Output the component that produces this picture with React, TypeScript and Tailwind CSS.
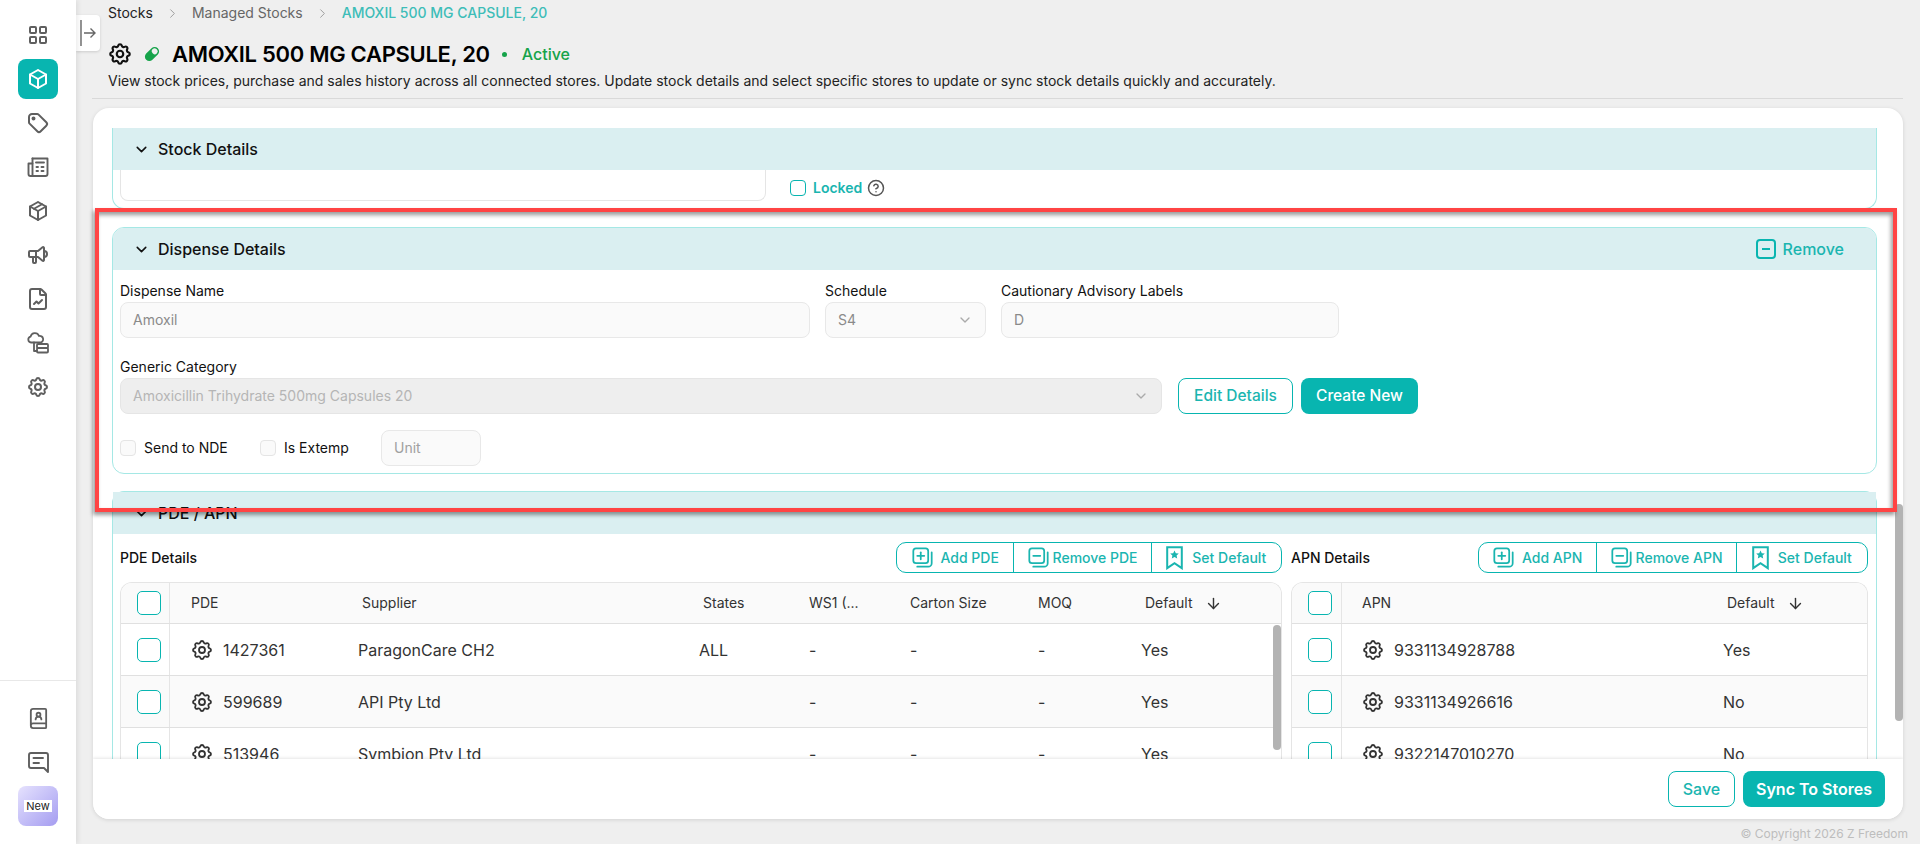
import React from "react";
import { ArrowDown, BookUser, ChevronDown, ChevronRight, CircleHelp, FileChartLine } from "lucide-react";
import { TbBox, TbLayoutGrid, TbPackage, TbSettings, TbSpeakerphone, TbTag } from "react-icons/tb";

const CloudDb = () => (
  <svg width="24" height="24" viewBox="0 0 24 24" fill="none" stroke="currentColor" strokeWidth="1.8" strokeLinejoin="round" strokeLinecap="round">
    <path d="M5 11.5a3 3 0 0 1-.4-5.9 4.4 4.4 0 0 1 8.4-.6 3.2 3.2 0 0 1 1.6 6.5H5z" />
    <path d="M8 11.5V20h3" />
    <rect x="11" y="13" width="11" height="4" rx="1" />
    <rect x="11" y="17" width="11" height="4.5" rx="1" />
  </svg>
);

const NewsGrid = () => (
  <svg width="24" height="24" viewBox="0 0 24 24" fill="none" stroke="currentColor" strokeWidth="1.9" strokeLinejoin="round" strokeLinecap="round">
    <path d="M6.5 3.5H21.5V19a2 2 0 0 1-2 2H4.5a2 2 0 0 1-2-2V8.5h4" />
    <path d="M6.5 3.5V21" />
    <path d="M10 7.5h8M10.5 12h1.5M15.5 12h2M10.5 16h1.5M15.5 16h2" />
  </svg>
);

const Chat = () => (
  <svg width="24" height="24" viewBox="0 0 24 24" fill="none" stroke="currentColor" strokeWidth="1.9" strokeLinejoin="round" strokeLinecap="round">
    <path d="M5 3h15a2 2 0 0 1 2 2v17l-4-4H5a2 2 0 0 1-2-2V5a2 2 0 0 1 2-2z" />
    <path d="M7.5 8h9.5M7.5 13h5.5" />
  </svg>
);

const Pill = () => (
  <svg width="18" height="18" viewBox="0 0 18 18" className="text-[#16a34a]">
    <g transform="rotate(-45 9 9)">
      <rect x="0.8" y="4.6" width="16.4" height="8.8" rx="4.4" fill="currentColor" />
      <rect x="10" y="6" width="5.6" height="6" rx="2.6" fill="#efefef" />
    </g>
  </svg>
);

const CopyIcon = ({ minus }: { minus?: boolean }) => (
  <svg width="21" height="21" viewBox="0 0 24 24" fill="none" stroke="currentColor" strokeWidth="2" strokeLinecap="round" strokeLinejoin="round" className="shrink-0">
    <rect x="1.5" y="1.5" width="17" height="17" rx="3" />
    <path d="M6 10h8" />
    {!minus && <path d="M10 6v8" />}
    <path d="M22.5 6v12.5a4 4 0 0 1-4 4H6" />
  </svg>
);

const BookmarkStar = () => (
  <svg width="17" height="24" viewBox="0 0 17 24" className="shrink-0">
    <path d="M1.2 1.2h14.6v21l-7.3-5-7.3 5z" fill="none" stroke="currentColor" strokeWidth="2" strokeLinejoin="miter" />
    <path d="M8.5 4.5l1.3 2.8 3 .3-2.2 2 .6 3-2.7-1.5-2.7 1.5.6-3-2.2-2 3-.3z" fill="currentColor" />
  </svg>
);

const Check = ({ disabled }: { disabled?: boolean }) => (
  <span className={disabled ? "block w-4 h-4 rounded border border-[#e5e5e5] bg-[#fafafa]" : "block w-6 h-6 rounded-[5px] border border-[#08b5b0] bg-white"} />
);

const sideItems = [TbLayoutGrid, TbBox, TbTag, NewsGrid, TbPackage, TbSpeakerphone, FileChartLine, CloudDb, TbSettings];

const Sidebar = () => (
  <aside className="w-[76px] shrink-0 bg-white flex flex-col items-center text-[#5f5f5f] shadow-[2px_0_5px_rgba(0,0,0,0.08)] z-10">
    <div className="flex flex-col gap-1 pt-[15px]">
      {sideItems.map((Icon, i) => (
        <div key={i} className={i === 1 ? "w-10 h-10 rounded-lg bg-[#08b5b0] text-white flex items-center justify-center" : "w-10 h-10 flex items-center justify-center"}>
          <Icon size={24} />
        </div>
      ))}
    </div>
    <div className="mt-auto w-full border-t border-[#e8e8e8] pt-[17px] pb-[18px] flex flex-col items-center gap-1">
      <div className="w-10 h-10 flex items-center justify-center"><BookUser size={23} strokeWidth={1.9} /></div>
      <div className="w-10 h-10 flex items-center justify-center"><Chat /></div>
      <div className="w-10 h-10 rounded-lg bg-gradient-to-br from-[#e6e2fd] to-[#a59cf0] flex items-center justify-center">
        <span className="bg-white text-[#222] text-[11px] leading-3 w-7 text-center">New</span>
      </div>
    </div>
  </aside>
);

const Field = ({ label, value, className, children }: { label: string; value: string; className: string; children?: React.ReactNode }) => (
  <div className={className}>
    <div className="text-sm leading-5 h-[21px] text-[#111]">{label}</div>
    <div className="h-9 rounded-lg border border-[#e8e8e8] bg-[#fafafa] flex items-center justify-between px-3 text-sm text-[#8a8a8a]">
      {value}
      {children}
    </div>
  </div>
);

const PanelHead = ({ title, children }: { title: string; children?: React.ReactNode }) => (
  <div className="h-[42px] bg-[#daeff1] flex items-center pl-[20px] pr-[32px] text-[#111]">
    <ChevronDown size={17} strokeWidth={2.2} />
    <span className="ml-[8px] text-base font-medium">{title}</span>
    {children}
  </div>
);

const GroupButtons = ({ items, className }: { items: { label: string; w: string; icon: React.ReactNode; gap: string }[]; className: string }) => (
  <div className={"flex h-[31px] rounded-[10px] border border-[#08b5b0] text-[#1ab5b0] text-sm font-medium bg-white divide-x divide-[#08b5b0] " + className}>
    {items.map((b) => (
      <div key={b.label} className={"flex items-center justify-center " + b.w + " " + b.gap}>
        {b.icon}
        <span>{b.label}</span>
      </div>
    ))}
  </div>
);

const pdeRows = [
  ["1427361", "ParagonCare CH2", "ALL", "Yes"],
  ["599689", "API Pty Ltd", "", "Yes"],
  ["513946", "Symbion Pty Ltd", "", "Yes"],
];

const apnRows = [
  ["9331134928788", "Yes"],
  ["9331134926616", "No"],
  ["9322147010270", "No"],
];

const CheckCell = ({ w }: { w: string }) => (
  <div className={"shrink-0 h-full border-r border-[#e5e5e5] flex items-center pl-[16px] " + w}>
    <Check />
  </div>
);

const DefaultHead = () => (
  <span className="flex items-center gap-[12px]">
    Default <ArrowDown size={17} strokeWidth={2} />
  </span>
);

const PdeTable = () => (
  <div className="relative w-[1162px] rounded-t-xl border border-[#e5e5e5] border-b-0 overflow-hidden text-[#333]">
    <div className="h-[41px] bg-[#fafafa] border-b border-[#e0e0e0] flex items-center text-sm">
      <CheckCell w="w-[49px]" />
      <div className="w-[188px] pl-[21px]">PDE</div>
      <div className="w-[341px] pl-[4px]">Supplier</div>
      <div className="w-[110px] pl-[4px]">States</div>
      <div className="w-[101px]">WS1 (...</div>
      <div className="w-[128px]">Carton Size</div>
      <div className="w-[103px]">MOQ</div>
      <div className="pl-[4px]"><DefaultHead /></div>
    </div>
    {pdeRows.map((r, i) => (
      <div key={r[0]} className={(i === 1 ? "bg-[#fafafa] " : "bg-white ") + "h-[52px] border-b border-[#e0e0e0] flex items-center text-base"}>
        <CheckCell w="w-[49px]" />
        <div className="w-[188px] pl-[20px] flex items-center gap-[9px]"><TbSettings size={24} strokeWidth={1.8} />{r[0]}</div>
        <div className="w-[341px]">{r[1]}</div>
        <div className="w-[110px]">{r[2]}</div>
        <div className="w-[101px]">-</div>
        <div className="w-[128px]">-</div>
        <div className="w-[103px]">-</div>
        <div>{r[3]}</div>
      </div>
    ))}
    <div className="absolute right-0 top-[42px] w-2 h-[125px] rounded-full bg-[#b3b3b3]" />
  </div>
);

const ApnTable = () => (
  <div className="w-[577px] rounded-t-xl border border-[#e5e5e5] border-b-0 overflow-hidden text-[#333]">
    <div className="h-[41px] bg-[#fafafa] border-b border-[#e0e0e0] flex items-center text-sm">
      <CheckCell w="w-[50px]" />
      <div className="w-[381px] pl-[20px]">APN</div>
      <div className="pl-[4px]"><DefaultHead /></div>
    </div>
    {apnRows.map((r, i) => (
      <div key={r[0]} className={(i === 1 ? "bg-[#fafafa] " : "bg-white ") + "h-[52px] border-b border-[#e0e0e0] flex items-center text-base"}>
        <CheckCell w="w-[50px]" />
        <div className="w-[381px] pl-[19px] flex items-center gap-[9px]"><TbSettings size={24} strokeWidth={1.8} />{r[0]}</div>
        <div>{r[1]}</div>
      </div>
    ))}
  </div>
);

export default function App() {
  return (
    <div className="relative flex h-screen overflow-hidden bg-[#efefef] font-['Inter',sans-serif]">
      <Sidebar />

      <main className="relative flex-1 min-w-0 flex flex-col">
        <div className="absolute left-0 top-[15px] w-6 h-9 bg-white rounded-r shadow-[0_1px_3px_rgba(0,0,0,0.15)] flex items-center justify-center text-[#666]">
          <svg width="18" height="28" viewBox="0 0 18 28" fill="none" stroke="currentColor" strokeWidth="1.4">
            <path d="M2 1v26" />
            <path d="M5 14h11M11.5 9.5L16 14l-4.5 4.5" />
          </svg>
        </div>

        <div className="pl-[32px] h-[26px] flex items-center text-sm">
          <span className="text-[#222]">Stocks</span>
          <ChevronRight size={15} strokeWidth={1.5} className="mx-[12px] text-[#999]" />
          <span className="text-[#666]">Managed Stocks</span>
          <ChevronRight size={15} strokeWidth={1.5} className="mx-[12px] text-[#999]" />
          <span className="font-medium text-[#3dbdb8]">AMOXIL 500 MG CAPSULE, 20</span>
        </div>

        <div className="pl-[31px] mt-[12px] h-[32px] flex items-center">
          <TbSettings size={26} className="text-[#111]" />
          <span className="ml-[10px]"><Pill /></span>
          <span className="ml-[11px] text-[22px] font-semibold tracking-[-0.3px] text-black">AMOXIL 500 MG CAPSULE, 20</span>
          <span className="ml-[12px] w-[5px] h-[5px] rounded-full bg-[#16a34a]" />
          <span className="ml-[15px] text-base font-medium text-[#16a34a]">Active</span>
        </div>

        <div className="pl-[32px] mt-[1px] h-[20px] text-sm leading-5 text-[#222]">
          View stock prices, purchase and sales history across all connected stores. Update stock details and select specific stores to update or sync stock details quickly and accurately.
        </div>

        <div className="ml-[16px] mr-[17px] mt-[7px] border-t border-[#d9d9d9]" />

        <div className="relative ml-[17px] mr-[17px] mt-[9px] h-[711px] rounded-2xl bg-white shadow-[0_1px_4px_rgba(0,0,0,0.12)] overflow-hidden flex flex-col">
          <div className="relative h-[651px] overflow-hidden pt-5 pl-[19px] pr-[26px]">
            {/* Stock Details */}
            <div className="rounded-b-xl border border-[#a5e8e5] border-t-0 overflow-hidden">
              <PanelHead title="Stock Details" />
              <div className="h-[38px] pl-[7px] flex">
                <div className="w-[646px] h-[31px] rounded-b-lg border border-t-0 border-[#e5e5e5]" />
                <div className="ml-[24px] h-[32px] mt-[2px] flex items-center">
                  <span className="block w-4 h-4 rounded border border-[#08b5b0]" />
                  <span className="ml-[7px] text-sm font-semibold text-[#1ab5b0]">Locked</span>
                  <CircleHelp size={18} className="ml-[5px] text-[#555]" />
                </div>
              </div>
            </div>

            {/* Dispense Details */}
            <div className="mt-[18px] h-[247px] rounded-xl border border-[#a5e8e5] overflow-hidden">
              <PanelHead title="Dispense Details">
                <div className="ml-auto flex items-center gap-[7px] text-[#1ab5b0]">
                  <span className="w-5 h-5 rounded-[4px] border-2 border-[#08b5b0] flex items-center justify-center">
                    <span className="w-2 h-0.5 bg-[#08b5b0]" />
                  </span>
                  <span className="text-base font-medium">Remove</span>
                </div>
              </PanelHead>
              <div className="px-[7px] pt-[11px]">
                <div className="flex gap-[15px]">
                  <Field label="Dispense Name" value="Amoxil" className="w-[690px]" />
                  <Field label="Schedule" value="S4" className="w-[161px]">
                    <ChevronDown size={16} className="text-[#aaa]" />
                  </Field>
                  <Field label="Cautionary Advisory Labels" value="D" className="w-[338px]" />
                </div>
                <div className="mt-[19px] text-sm leading-5 h-[21px] text-[#111]">Generic Category</div>
                <div className="flex items-center">
                  <div className="w-[1042px] h-9 rounded-lg border border-[#e5e5e5] bg-[#eeeeee] flex items-center justify-between px-3 text-sm text-[#b5b5b5]">
                    Amoxicillin Trihydrate 500mg Capsules 20
                    <ChevronDown size={16} className="text-[#aaa]" />
                  </div>
                  <button className="ml-4 w-[115px] h-9 rounded-lg border border-[#08b5b0] bg-white text-[15.5px] font-medium text-[#1ab5b0]">Edit Details</button>
                  <button className="ml-2 w-[117px] h-9 rounded-lg bg-[#08b5b0] text-[15.5px] font-medium text-white">Create New</button>
                </div>
                <div className="mt-4 flex items-center text-sm text-[#111]">
                  <Check disabled />
                  <span className="ml-2 w-[116px]">Send to NDE</span>
                  <Check disabled />
                  <span className="ml-2 w-[97px]">Is Extemp</span>
                  <div className="w-[100px] h-9 rounded-lg border border-[#e8e8e8] bg-[#fafafa] flex items-center px-3 text-[#a0a0a0]">Unit</div>
                </div>
              </div>
            </div>

            {/* PDE / APN */}
            <div className="mt-[17px] rounded-t-xl border border-b-0 border-[#a5e8e5]">
              <PanelHead title="PDE / APN" />
              <div className="px-[7px] pt-2 flex gap-[9px]">
                <div>
                  <div className="h-[31px] flex items-center justify-between text-sm font-medium text-[#111] mb-[9px]">
                    PDE Details
                    <GroupButtons
                      className="w-[386px]"
                      items={[
                        { label: "Add PDE", w: "w-[118px]", gap: "gap-2", icon: <CopyIcon /> },
                        { label: "Remove PDE", w: "w-[138px]", gap: "gap-1", icon: <CopyIcon minus /> },
                        { label: "Set Default", w: "w-[130px]", gap: "gap-[9px]", icon: <BookmarkStar /> },
                      ]}
                    />
                  </div>
                  <PdeTable />
                </div>
                <div>
                  <div className="h-[31px] flex items-center justify-between text-sm font-medium text-[#111] mb-[9px]">
                    APN Details
                    <GroupButtons
                      className="w-[390px]"
                      items={[
                        { label: "Add APN", w: "w-[119px]", gap: "gap-2", icon: <CopyIcon /> },
                        { label: "Remove APN", w: "w-[140px]", gap: "gap-1", icon: <CopyIcon minus /> },
                        { label: "Set Default", w: "w-[131px]", gap: "gap-[9px]", icon: <BookmarkStar /> },
                      ]}
                    />
                  </div>
                  <ApnTable />
                </div>
              </div>
            </div>

            <div className="absolute right-0 top-[396px] w-2 h-[217px] rounded-full bg-[#b3b3b3]" />
          </div>

          <div className="flex-1 relative bg-white shadow-[0_-1px_3px_rgba(0,0,0,0.1)] flex items-center justify-end gap-2 pr-[18px]">
            <button className="w-[67px] h-9 rounded-lg border border-[#08b5b0] bg-white text-base font-medium text-[#1ab5b0]">Save</button>
            <button className="w-[142px] h-9 rounded-lg bg-[#08b5b0] text-base font-semibold text-white">Sync To Stores</button>
          </div>
        </div>

        <div className="absolute right-[12px] bottom-[2px] text-xs leading-4 text-[#bdbdbd]">© Copyright 2026 Z Freedom</div>
      </main>

      {/* annotation box drawn over the page, its shadow falls down and to the left */}
      <div className="absolute left-[95px] top-[208px] w-[1802px] h-[304px] border-4 border-[#ff4444] shadow-[-2px_3px_4px_rgba(0,0,0,0.4),inset_-2px_3px_4px_rgba(0,0,0,0.4)] pointer-events-none z-20" />
    </div>
  );
}
